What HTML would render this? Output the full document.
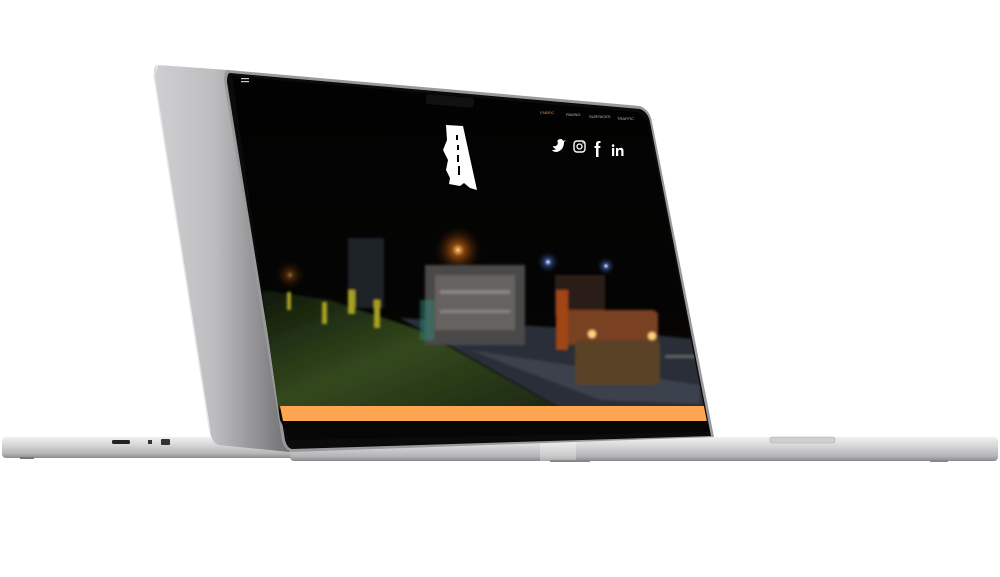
<!DOCTYPE html>
<html><head><meta charset="utf-8"><style>
html,body{margin:0;padding:0;background:#fff;width:1000px;height:577px;overflow:hidden;font-family:"Liberation Sans",sans-serif}
</style></head><body>
<svg width="1000" height="577" viewBox="0 0 1000 577" xmlns="http://www.w3.org/2000/svg">
<defs>
<linearGradient id="base" x1="0" y1="0" x2="0" y2="1">
<stop offset="0" stop-color="#f0f0f0"/><stop offset="0.35" stop-color="#d9d9db"/><stop offset="0.8" stop-color="#b4b4b6"/><stop offset="1" stop-color="#8a8a8c"/></linearGradient>
<linearGradient id="lid" x1="0" y1="0" x2="1" y2="0">
<stop offset="0" stop-color="#d0d0d2"/><stop offset="0.45" stop-color="#bdbdbf"/><stop offset="1" stop-color="#6f6f71"/></linearGradient>
<linearGradient id="sky" x1="0" y1="0" x2="0" y2="1">
<stop offset="0" stop-color="#020202"/><stop offset="1" stop-color="#070605"/></linearGradient>
<radialGradient id="glowO"><stop offset="0" stop-color="#ffd27a"/><stop offset="0.25" stop-color="#b85a10" stop-opacity="0.7"/><stop offset="1" stop-color="#000" stop-opacity="0"/></radialGradient>
<radialGradient id="glowB"><stop offset="0" stop-color="#e8f0ff"/><stop offset="0.3" stop-color="#4060b0" stop-opacity="0.6"/><stop offset="1" stop-color="#000" stop-opacity="0"/></radialGradient>
<linearGradient id="grass" x1="0" y1="0" x2="1" y2="1">
<stop offset="0" stop-color="#10180a"/><stop offset="0.5" stop-color="#33481c"/><stop offset="1" stop-color="#1c2814"/></linearGradient>
<clipPath id="scr"><polygon points="232,76 638,112 648,122 709,432 290,440 280,420"/></clipPath>
<filter id="bl"><feGaussianBlur stdDeviation="1.2"/></filter>
</defs>
<rect x="2" y="437" width="300" height="21" rx="4" fill="url(#base)"/>
<rect x="112" y="440" width="18" height="4" rx="1.5" fill="#222"/>
<rect x="148" y="440" width="4" height="4" fill="#333"/>
<rect x="161" y="439" width="9" height="6" rx="1" fill="#333"/>
<rect x="20" y="457" width="14" height="2" fill="#777"/>
<path d="M158,65 L228,70 L290,452 L218,445 Q212,442 210,432 L154,75 Q153,66 158,65 Z" fill="url(#lid)"/>
<path d="M158,65 L154,75 L210,432" stroke="#e6e6e6" stroke-width="1.5" fill="none"/>
<rect x="290" y="437" width="708" height="24" rx="4" fill="url(#base)"/>
<rect x="540" y="437" width="36" height="24" fill="#fff" opacity="0.3"/>
<rect x="770" y="437" width="65" height="6" rx="2" fill="#cfcfd1" stroke="#aaa" stroke-width="0.5"/>
<rect x="320" y="441" width="17" height="4" rx="1.5" fill="#333"/>
<rect x="347" y="441" width="6" height="4" rx="1" fill="#222"/>
<rect x="364" y="441" width="6" height="4" rx="1" fill="#222"/>
<rect x="381" y="440" width="2" height="6" rx="1" fill="#333"/>
<rect x="550" y="460" width="40" height="2" fill="#888"/>
<rect x="930" y="460" width="18" height="2" fill="#888"/>
<path d="M228,70 L640,106 Q650,110 652,122 L714,437 L292,452 Q284,450 282,440 L224,80 Q224,70 228,70 Z" fill="#9a9a9c"/>
<path d="M230,73 L640,109 Q648,112 650,122 L711,436 L292,449 Q287,448 285,440 L227,82 Q227,73 230,73 Z" fill="#0b0b0b"/>
<g clip-path="url(#scr)">
<rect x="220" y="70" width="500" height="380" fill="url(#sky)"/>
<polygon points="262,290 330,300 420,330 560,408 262,408" fill="url(#grass)" filter="url(#bl)"/>
<polygon points="400,318 560,408 705,408 705,340 600,330" fill="#2c2f38" filter="url(#bl)"/>
<polygon points="470,350 600,400 700,404 700,385" fill="#4a505c" opacity="0.6" filter="url(#bl)"/>
<circle cx="458" cy="250" r="26" fill="url(#glowO)"/>
<circle cx="548" cy="262" r="12" fill="url(#glowB)"/>
<circle cx="606" cy="266" r="10" fill="url(#glowB)"/>
<circle cx="290" cy="275" r="16" fill="url(#glowO)" opacity="0.5"/>
<g filter="url(#bl)">
<rect x="348" y="238" width="36" height="70" fill="#1f2128"/>
<rect x="425" y="265" width="100" height="80" fill="#4a4848"/>
<rect x="435" y="275" width="80" height="55" fill="#7a746e" opacity="0.6"/>
<rect x="440" y="290" width="70" height="4" fill="#aaa" opacity="0.5"/>
<rect x="440" y="310" width="70" height="3" fill="#aaa" opacity="0.5"/>
<rect x="420" y="300" width="14" height="40" fill="#2e8a7a" opacity="0.5"/>
<rect x="555" y="275" width="50" height="40" fill="#2a1e18"/>
<rect x="562" y="310" width="96" height="35" rx="6" fill="#7a4020"/>
<rect x="575" y="340" width="85" height="45" rx="6" fill="#5a4228"/>
<circle cx="592" cy="334" r="4" fill="#ffd080"/><circle cx="652" cy="336" r="4" fill="#ffd080"/>
<rect x="556" y="290" width="12" height="60" fill="#a04418"/>
<rect x="322" y="302" width="5" height="22" fill="#a8a020"/>
<rect x="348" y="290" width="7" height="24" fill="#a8a020"/>
<rect x="374" y="300" width="6" height="28" fill="#a8a020"/>
<rect x="287" y="292" width="4" height="18" fill="#a8a020"/>
<rect x="665" y="355" width="40" height="3" fill="#666"/>
</g>
<polygon points="280,406 706,406 708,421 283,421" fill="#ffa552"/>
</g>
<rect x="426" y="96" width="48" height="10" rx="3" fill="#111" transform="rotate(5 450 101)"/>
<rect x="241" y="78" width="8" height="1.2" fill="#ccc"/>
<rect x="241" y="81" width="8" height="1.2" fill="#ccc"/>
<g font-size="4" fill="#bbb">
<text x="540" y="114" fill="#d08a40">FABRIC</text>
<text x="566" y="116">PAVING</text>
<text x="589" y="118">SURFACES</text>
<text x="617" y="120">TRAFFIC</text>
</g>
<path d="M446,125 L463,126 L477,190 L470,188 L464,183 L460,186 L449,184 L450,178 L446,170 L448,160 L443,150 L447,140 Z" fill="#fff"/>
<rect x="456" y="135" width="2" height="5" fill="#000"/>
<rect x="457" y="145" width="2" height="5" fill="#000"/>
<rect x="457" y="155" width="2" height="7" fill="#000"/>
<rect x="458" y="166" width="2" height="9" fill="#000"/>
<g fill="#fff">
<path d="M553,146 Q557,147 558,143 Q556,140 560,139 Q563,139 563,141 L566,140 L564,142 Q564,150 557,152 Q553,152 552,150 Q555,150 556,149 Q553,148 553,146 Z"/>
<rect x="574" y="141" width="11" height="11" rx="3" fill="none" stroke="#fff" stroke-width="1.4"/>
<circle cx="579.5" cy="146.5" r="2.5" fill="none" stroke="#fff" stroke-width="1.3"/>
<circle cx="583" cy="143" r="0.7"/>
<path d="M596,157 L596,148 L594.5,148 L594.5,146 L596,146 L596,144 Q596,141 599,141 L600.5,141 L600.5,143 L599.5,143 Q598.5,143 598.5,144.5 L598.5,146 L600.5,146 L600.2,148 L598.5,148 L598.5,157 Z"/>
<rect x="612" y="148" width="2.2" height="8"/>
<circle cx="613.1" cy="145.6" r="1.3"/>
<path d="M616,148 L618,148 L618,149 Q619,147.7 621,147.7 Q623.5,147.7 623.5,151 L623.5,156 L621.3,156 L621.3,151.5 Q621.3,149.8 620,149.8 Q618.2,149.8 618.2,152 L618.2,156 L616,156 Z"/>
</g>
</svg>
</body></html>
